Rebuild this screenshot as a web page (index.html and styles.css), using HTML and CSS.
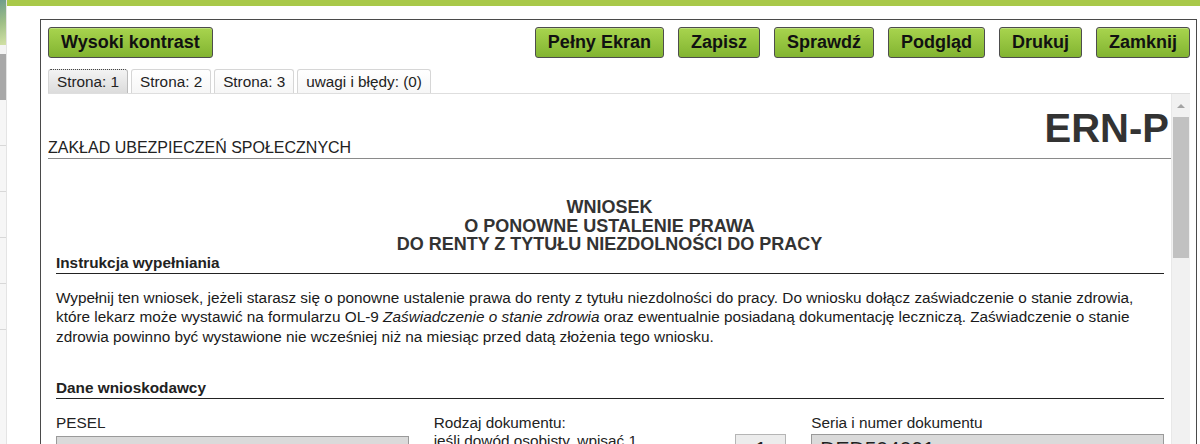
FILE: index.html
```html
<!DOCTYPE html>
<html lang="pl">
<head>
  <meta charset="UTF-8">
  <title>ERN-P - Wniosek</title>
  <link rel="stylesheet" href="styles.css">
</head>
<body>
  <div class="screen">
    <!-- Page behind the dialog -->
    <div class="bg-strip">
      <div class="strip-logo"></div>
      <div class="strip-gap"></div>
      <div class="strip-nav"></div>
      <div class="strip-list">
        <div class="strip-row"></div>
        <div class="strip-row"></div>
        <div class="strip-row"></div>
        <div class="strip-row"></div>
        <div class="strip-row"></div>
      </div>
    </div>

    <div class="main">
      <div class="topbar"></div>
      <div class="stage">
        <!-- Form dialog -->
        <div class="dialog">
          <div class="toolbar">
            <button class="btn">Wysoki kontrast</button>
            <div class="toolbar-right">
              <button class="btn">Pełny Ekran</button>
              <button class="btn">Zapisz</button>
              <button class="btn">Sprawdź</button>
              <button class="btn">Podgląd</button>
              <button class="btn">Drukuj</button>
              <button class="btn">Zamknij</button>
            </div>
          </div>

          <div class="tabs">
            <button class="tab active">Strona: 1</button>
            <button class="tab">Strona: 2</button>
            <button class="tab">Strona: 3</button>
            <button class="tab">uwagi i błędy: (0)</button>
          </div>

          <div class="frame">
            <div class="page">
              <div class="form-head">
                <span class="institution">ZAKŁAD UBEZPIECZEŃ SPOŁECZNYCH</span>
                <span class="form-code">ERN-P</span>
              </div>

              <h1 class="form-title">WNIOSEK<br>O PONOWNE USTALENIE PRAWA<br>DO RENTY Z TYTUŁU NIEZDOLNOŚCI DO PRACY</h1>

              <div class="section">
                <h2>Instrukcja wypełniania</h2>
                <p class="intro">Wypełnij ten wniosek, jeżeli starasz się o ponowne ustalenie prawa do renty z tytułu niezdolności do pracy. Do wniosku dołącz zaświadczenie o stanie zdrowia, które lekarz może wystawić na formularzu OL-9 <em>Zaświadczenie o stanie zdrowia</em> oraz ewentualnie posiadaną dokumentację leczniczą. Zaświadczenie o stanie zdrowia powinno być wystawione nie wcześniej niż na miesiąc przed datą złożenia tego wniosku.</p>
              </div>

              <div class="section applicant">
                <h2>Dane wnioskodawcy</h2>
                <div class="fields">
                  <div class="field">
                    <label>PESEL</label>
                    <div class="input pesel">90021103312</div>
                  </div>
                  <div class="field doc-type">
                    <div class="doc-text">
                      <label>Rodzaj dokumentu:</label>
                      <span>jeśli dowód osobisty, wpisać 1</span>
                    </div>
                    <div class="input small">1</div>
                  </div>
                  <div class="field">
                    <label>Seria i numer dokumentu</label>
                    <div class="input doc-no">DED504091</div>
                  </div>
                </div>
              </div>
            </div>
            <div class="scrollbar">
              <div class="sb-up"><span></span></div>
              <div class="sb-thumb"></div>
            </div>
          </div>
        </div>
      </div>
    </div>
  </div>
</body>
</html>
```

FILE: styles.css
```css
/* Base */
* { box-sizing: border-box; margin: 0; padding: 0; }
body {
  font-family: 'Liberation Sans', Arial, sans-serif;
  background: #fff;
  color: #222;
  width: 1200px;
  height: 444px;
  overflow: hidden;
}
.screen {
  display: flex;
  height: 444px;
}

/* Strip of the page behind the dialog */
.bg-strip {
  width: 7px;
  display: flex;
  flex-direction: column;
  border-right: 1px solid #e4e4e4;
}
.strip-logo {
  height: 45px;
  background: linear-gradient(160deg, #6f9c8c 0%, #9fbf86 50%, #d3e2a6 100%);
}
.strip-gap { height: 9px; background: #f4f4f4; }
.strip-nav { height: 46px; background: #a8a8a8; }
.strip-list { flex: 1; background: #f6f6f6; }
.strip-row {
  height: 46px;
  border-bottom: 1px solid #d8d8d8;
}

/* Main area */
.main {
  flex: 1;
  display: flex;
  flex-direction: column;
}
.topbar {
  height: 6px;
  background: #a9c94a;
}
.stage {
  flex: 1;
  min-height: 0;
  padding: 13px 3px 0 33px;
}

/* Dialog */
.dialog {
  height: 100%;
  display: flex;
  flex-direction: column;
  border: 1px solid #4a4a4a;
  border-bottom: none;
  padding: 7px 6px 0 7px;
}
.toolbar {
  display: flex;
  justify-content: space-between;
}
.toolbar-right {
  display: flex;
  gap: 14px;
}
.btn {
  height: 31px;
  padding: 0 12px;
  font-family: 'Liberation Sans', Arial, sans-serif;
  font-size: 18px;
  font-weight: bold;
  color: #111;
  background: linear-gradient(#a8d44e, #82b431);
  border: 1px solid #4d4d4d;
  border-radius: 3px;
  box-shadow: inset 0 1px 0 rgba(255,255,255,0.25);
  cursor: pointer;
}

/* Tabs */
.tabs {
  display: flex;
  gap: 3px;
  margin-top: 11px;
  height: 24px;
}
.tab {
  padding: 0 8px;
  font-family: 'Liberation Sans', Arial, sans-serif;
  font-size: 15.3px;
  color: #222;
  background: linear-gradient(#fff, #f6f6f6);
  border: 1px solid #d6d6d6;
  border-bottom: none;
  border-radius: 3px 3px 0 0;
  cursor: pointer;
}
.tab.active {
  background: linear-gradient(#f3f3f3, #dcdcdc);
  border-top: 1px dotted #444;
  border-right-color: #bbb;
}

/* Scrolling frame */
.frame {
  flex: 1;
  min-height: 0;
  display: flex;
  border-top: 1px solid #dedede;
  overflow: hidden;
}
.page {
  flex: 1;
  overflow: hidden;
}
.scrollbar {
  width: 19px;
  background: #f1f1f1;
  border-left: 1px solid #e8e8e8;
}
.sb-up {
  height: 23px;
  display: flex;
  justify-content: center;
  align-items: center;
}
.sb-up span {
  border-left: 4px solid transparent;
  border-right: 4px solid transparent;
  border-bottom: 4px solid #a3a3a3;
}
.sb-thumb {
  height: 141px;
  margin: 0 1px;
  background: #c1c1c1;
}

/* Form header */
.form-head {
  display: flex;
  justify-content: space-between;
  align-items: flex-end;
  padding: 14px 2px 1px 0;
  border-bottom: 1px solid #8a8a8a;
}
.institution {
  font-size: 16px;
  line-height: 18px;
  color: #222;
}
.form-code {
  font-size: 40px;
  line-height: 40px;
  font-weight: bold;
  color: #333;
  margin-bottom: 9px;
}
.form-title {
  margin-top: 39px;
  text-align: center;
  font-size: 18px;
  line-height: 18.5px;
  font-weight: bold;
  color: #333;
}

/* Sections */
.section {
  padding: 0 7px 0 8px;
}
.section h2 {
  font-size: 15.33px;
  line-height: 18px;
  font-weight: bold;
  color: #222;
  padding-bottom: 1px;
  border-bottom: 1px solid #222;
}
.intro {
  margin-top: 14px;
  font-size: 15.33px;
  line-height: 19.5px;
  color: #1a1a1a;
}
.applicant {
  margin-top: 33px;
}

/* Fields */
.fields {
  display: grid;
  grid-template-columns: repeat(3, 1fr);
  gap: 25px;
  margin-top: 15px;
}
.field label,
.doc-text span {
  display: block;
  font-size: 15.33px;
  line-height: 18px;
  color: #222;
}
.doc-type {
  display: flex;
  justify-content: space-between;
}
.input {
  height: 28px;
  padding: 0 8px;
  font-size: 21px;
  line-height: 28px;
  color: #222;
  background: #dadada;
  border: 1px solid #9a9a9a;
}
.pesel { margin-top: 4px; }
.doc-no { margin-top: 2px; }
.input.small {
  width: 51px;
  margin-top: 20px;
  text-align: center;
  background: #ececec;
  border-color: #b5b5b5;
}
```
